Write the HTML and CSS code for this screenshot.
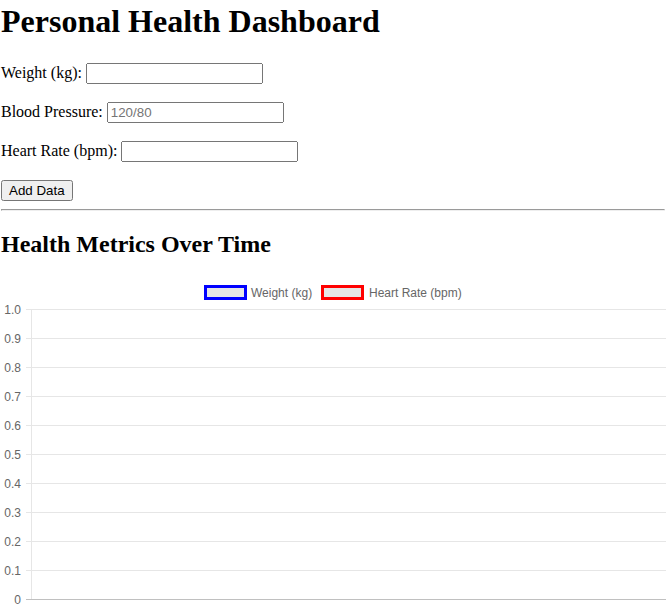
FILE: index.html
```html
<!DOCTYPE html>
<html lang="en">
<head>
<meta charset="utf-8">
<title>Personal Health Dashboard</title>
<link rel="stylesheet" href="styles.css">
</head>
<body>
<h1 class="title">Personal Health Dashboard</h1>
<p class="field"><label for="weight">Weight (kg):</label> <input type="text" id="weight" class="entry"></p>
<p class="field"><label for="bp">Blood Pressure:</label> <input type="text" id="bp" class="entry" placeholder="120/80"></p>
<p class="field"><label for="hr">Heart Rate (bpm):</label> <input type="text" id="hr" class="entry"></p>
<button type="button" class="add-btn">Add Data</button>
<hr class="divider">
<h2 class="subtitle">Health Metrics Over Time</h2>
<div class="chart">
<svg class="chart-svg" width="665" height="340" viewBox="0 0 665 340" xmlns="http://www.w3.org/2000/svg">
  <g class="legend">
    <rect x="203.5" y="10.5" width="40" height="12" fill="#e6e6e6" stroke="#0000ff" stroke-width="3"/>
    <text x="249" y="20.5" class="legend-text">Weight (kg)</text>
    <rect x="320.5" y="10.5" width="40" height="12" fill="#e6e6e6" stroke="#ff0000" stroke-width="3"/>
    <text x="367" y="20.5" class="legend-text">Heart Rate (bpm)</text>
  </g>
  <g class="grid" stroke="#e6e6e6" stroke-width="1">
    <line x1="24" y1="33.5" x2="664" y2="33.5"/>
    <line x1="24" y1="62.5" x2="664" y2="62.5"/>
    <line x1="24" y1="91.5" x2="664" y2="91.5"/>
    <line x1="24" y1="120.5" x2="664" y2="120.5"/>
    <line x1="24" y1="149.5" x2="664" y2="149.5"/>
    <line x1="24" y1="178.5" x2="664" y2="178.5"/>
    <line x1="24" y1="207.5" x2="664" y2="207.5"/>
    <line x1="24" y1="236.5" x2="664" y2="236.5"/>
    <line x1="24" y1="265.5" x2="664" y2="265.5"/>
    <line x1="24" y1="294.5" x2="664" y2="294.5"/>
    <line x1="29.5" y1="33" x2="29.5" y2="323"/>
  </g>
  <line x1="24" y1="323.5" x2="664" y2="323.5" stroke="#c0c0c0" stroke-width="1"/>
  <g class="ticks">
    <text x="19" y="37.5">1.0</text>
    <text x="19" y="66.5">0.9</text>
    <text x="19" y="95.5">0.8</text>
    <text x="19" y="124.5">0.7</text>
    <text x="19" y="153.5">0.6</text>
    <text x="19" y="182.5">0.5</text>
    <text x="19" y="211.5">0.4</text>
    <text x="19" y="240.5">0.3</text>
    <text x="19" y="269.5">0.2</text>
    <text x="19" y="298.5">0.1</text>
    <text x="19" y="327.5">0</text>
  </g>
</svg>
</div>
</body>
</html>
```
FILE: styles.css
```css
html, body {
  background: #ffffff;
}
body {
  margin: 0;
  padding: 0 2px 0 1px;
  font-family: "Liberation Serif", "Times New Roman", serif;
  font-size: 16px;
  color: #000000;
  overflow: hidden;
}
.title {
  font-size: 32px;
  font-weight: bold;
  line-height: 37px;
  margin: 3px 0 21.44px;
}
.field {
  margin: 16px 0;
  line-height: 23px;
}
.entry {
  box-sizing: border-box;
  width: 177px;
  height: 21px;
  font-family: "Liberation Sans", Arial, sans-serif;
  font-size: 13.33px;
}
.add-btn {
  height: 21px;
  margin-top: 2px;
  font-family: "Liberation Sans", Arial, sans-serif;
  font-size: 13.33px;
}
.divider {
  margin: 8px 0;
}
.subtitle {
  font-size: 24px;
  font-weight: bold;
  margin: 19.92px 0 17.92px;
}
.chart {
  display: block;
  margin-left: 1px;
}
.chart-svg {
  display: block;
}
.legend-text {
  font-family: "Liberation Sans", Arial, sans-serif;
  font-size: 12px;
  fill: #666666;
}
.ticks text {
  font-family: "Liberation Sans", Arial, sans-serif;
  font-size: 12px;
  fill: #666666;
  text-anchor: end;
}
```
